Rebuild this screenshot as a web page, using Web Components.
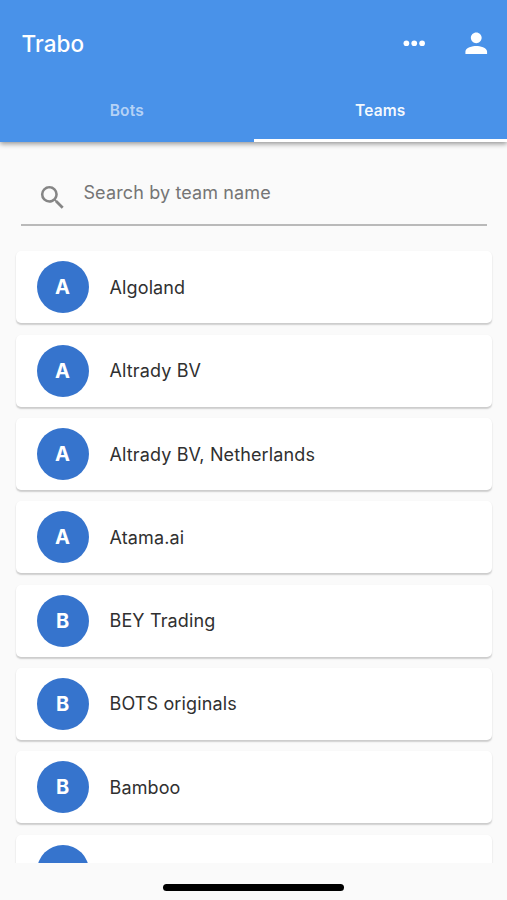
<!DOCTYPE html>
<html lang="en">
<head>
<meta charset="utf-8">
<meta name="viewport" content="width=device-width, initial-scale=1">
<title>Trabo</title>
<style>
  body {
    margin: 0;
    height: 900px;
    overflow: hidden;
    font-family: Inter, "Liberation Sans", sans-serif;
    background: #fafafa;
  }
</style>
</head>
<body>
<trabo-app>
  <trabo-header slot="header" title-text="Trabo">
    <trabo-tab>Bots</trabo-tab>
    <trabo-tab active>Teams</trabo-tab>
  </trabo-header>
  <team-search slot="search">Search by team name</team-search>
  <team-card initial="A">Algoland</team-card>
  <team-card initial="A">Altrady BV</team-card>
  <team-card initial="A">Altrady BV, Netherlands</team-card>
  <team-card initial="A">Atama.ai</team-card>
  <team-card initial="B">BEY Trading</team-card>
  <team-card initial="B">BOTS originals</team-card>
  <team-card initial="B">Bamboo</team-card>
  <team-card></team-card>
</trabo-app>

<script>
// Page frame: header, search, scrolling list and the home indicator
class TraboApp extends HTMLElement {
  constructor() {
    super();
    this.attachShadow({ mode: "open" });
    this.shadowRoot.innerHTML = `
      <style>
        :host {
          display: flex;
          flex-direction: column;
          height: 900px;
        }
        .list {
          flex: 1;
          min-height: 0;
          overflow: hidden;
          display: flex;
          flex-direction: column;
          gap: 11.3px;
          padding: 25.5px 15px 0 16px;
        }
        .bottom {
          flex: none;
          height: 37px;
          box-sizing: border-box;
          padding-top: 21px;
        }
        .indicator {
          width: 181px;
          height: 7px;
          margin: 0 auto;
          border-radius: 4px;
          background: #000;
        }
      </style>
      <slot name="header"></slot>
      <slot name="search"></slot>
      <div class="list"><slot></slot></div>
      <div class="bottom"><div class="indicator"></div></div>`;
  }
}

class TraboHeader extends HTMLElement {
  constructor() {
    super();
    this.attachShadow({ mode: "open" });
    this.shadowRoot.innerHTML = `
      <style>
        :host {
          display: flex;
          flex-direction: column;
          flex: none;
          height: 141.6px;
          position: relative;
          color: #fff;
          background: #4992e9;
          box-shadow: 0 2px 5px rgba(0,0,0,0.4);
        }
        .bar {
          display: flex;
          align-items: center;
          height: 86px;
          padding: 0 14.5px 0 21.5px;
        }
        .title {
          flex: 1;
          font-size: 22.5px;
          font-weight: 500;
          letter-spacing: 0.1px;
        }
        svg {
          width: 32.5px;
          height: 32.5px;
          fill: #fff;
        }
        .more {
          margin-right: 30px;
        }
        .tabs {
          flex: 1;
          display: flex;
        }
      </style>
      <div class="bar">
        <div class="title"></div>
        <svg class="more" viewBox="0 0 24 24"><circle cx="6.2" cy="12" r="2.1"/><circle cx="12" cy="12" r="2.1"/><circle cx="17.8" cy="12" r="2.1"/></svg>
        <svg viewBox="0 0 24 24"><path d="M12 12c2.21 0 4-1.79 4-4s-1.79-4-4-4-4 1.79-4 4 1.79 4 4 4zm0 2c-2.67 0-8 1.34-8 4v2h16v-2c0-2.66-5.33-4-8-4z"/></svg>
      </div>
      <div class="tabs"><slot></slot></div>`;
  }

  connectedCallback() {
    this.shadowRoot.querySelector(".title").textContent = this.getAttribute("title-text");
  }
}

class TraboTab extends HTMLElement {
  constructor() {
    super();
    this.attachShadow({ mode: "open" });
    this.shadowRoot.innerHTML = `
      <style>
        :host {
          flex: 1;
          display: flex;
          justify-content: center;
          box-sizing: border-box;
          padding-top: 15px;
          font-size: 15.5px;
          line-height: 20px;
          font-weight: 600;
          letter-spacing: 0.15px;
          color: rgba(255,255,255,0.6);
        }
        :host([active]) {
          color: rgba(255,255,255,0.94);
          border-bottom: 3px solid #fff;
        }
      </style>
      <slot></slot>`;
  }
}

class TeamSearch extends HTMLElement {
  constructor() {
    super();
    this.attachShadow({ mode: "open" });
    this.shadowRoot.innerHTML = `
      <style>
        :host {
          display: flex;
          flex: none;
          box-sizing: border-box;
          height: 63.4px;
          margin: 21px 20px 0 21px;
          padding-left: 15.7px;
          border-bottom: 2px solid #b9b9b9;
          color: #757575;
          font-size: 18px;
          line-height: 24px;
          letter-spacing: 0.13px;
        }
        svg {
          width: 31.25px;
          height: 31.25px;
          margin: 19px 15.5px 0 0;
          fill: #858585;
        }
        .hint {
          padding-top: 18.5px;
        }
      </style>
      <svg viewBox="0 0 24 24"><path d="M15.5 14h-.79l-.28-.27A6.471 6.471 0 0 0 16 9.5 6.5 6.5 0 1 0 9.5 16c1.61 0 3.09-.59 4.23-1.57l.27.28v.79l5 4.99L20.49 19l-4.99-5zm-6 0C7.01 14 5 11.99 5 9.5S7.01 5 9.5 5 14 7.01 14 9.5 11.99 14 9.5 14z"/></svg>
      <div class="hint"><slot></slot></div>`;
  }
}

class TeamCard extends HTMLElement {
  constructor() {
    super();
    this.attachShadow({ mode: "open" });
    this.shadowRoot.innerHTML = `
      <style>
        :host {
          display: flex;
          flex: none;
          align-items: center;
          box-sizing: border-box;
          height: 72px;
          padding-left: 20.5px;
          border-radius: 5px;
          background: #fff;
          box-shadow: 0 1.5px 1.5px rgba(0,0,0,0.17), 0 1px 2px rgba(0,0,0,0.03);
          color: #303030;
          font-size: 18px;
          letter-spacing: 0.13px;
        }
        .avatar {
          display: flex;
          align-items: center;
          justify-content: center;
          width: 52px;
          height: 52px;
          margin-right: 21px;
          border-radius: 50%;
          background: #3674cd;
          color: #fff;
          font-size: 20px;
          font-weight: 700;
          letter-spacing: 0;
        }
      </style>
      <div class="avatar"></div>
      <slot></slot>`;
  }

  connectedCallback() {
    this.shadowRoot.querySelector(".avatar").textContent = this.getAttribute("initial") || "";
  }
}

customElements.define("trabo-app", TraboApp);
customElements.define("trabo-header", TraboHeader);
customElements.define("trabo-tab", TraboTab);
customElements.define("team-search", TeamSearch);
customElements.define("team-card", TeamCard);
</script>
</body>
</html>
